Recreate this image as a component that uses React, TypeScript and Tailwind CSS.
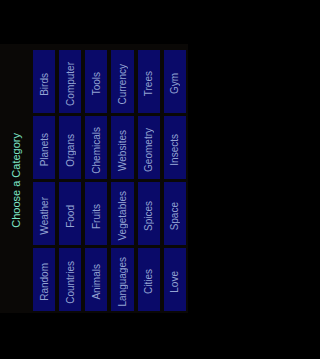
import React from "react";

const rows: string[][] = [
  ["Birds", "Computer", "Tools", "Currency", "Trees", "Gym"],
  ["Planets", "Organs", "Chemicals", "Websites", "Geometry", "Insects"],
  ["Weather", "Food", "Fruits", "Vegetables", "Spices", "Space"],
  ["Random", "Countries", "Animals", "Languages", "Cities", "Love"],
];

export default function App() {
  return (
    <div className="w-full min-h-[359px] bg-black">
      <div
        className="w-[202px] h-[359px] bg-black pt-[44px] overflow-hidden"
        style={{ fontFamily: '"Liberation Sans", Arial, sans-serif' }}
      >
        <div className="w-[188px] h-[269px] bg-[#0a0806] pt-[6px]">
          <div className="flex h-[261px]">
            <div className="w-[33px] flex items-center justify-center">
              <span className="[writing-mode:vertical-rl] rotate-180 text-[11px] text-[#7ee6c6] whitespace-nowrap">
                Choose a Category
              </span>
            </div>
            <div className="w-[153px] grid grid-cols-6 grid-rows-4 gap-x-[4px] gap-y-[3px]">
              {rows.flat().map((label) => (
                <div
                  key={label}
                  className="bg-[#0a0a69] flex items-center justify-center pt-[5px]"
                >
                  <span className="[writing-mode:vertical-rl] rotate-180 text-[10px] text-[#93a3d3] whitespace-nowrap">
                    {label}
                  </span>
                </div>
              ))}
            </div>
          </div>
        </div>
      </div>
    </div>
  );
}
